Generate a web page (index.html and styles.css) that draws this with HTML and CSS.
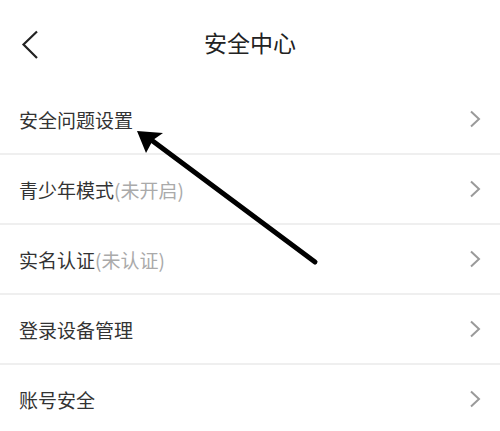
FILE: index.html
```html
<!DOCTYPE html>
<html lang="zh">
<head>
    <meta charset="UTF-8">
    <meta name="viewport" content="width=device-width, initial-scale=1.0">
    <title>安全中心</title>
    <link rel="stylesheet" href="styles.css">
</head>
<body>
<div id="page">
    <div class="header">
        <svg class="back" width="18" height="30" viewBox="0 0 18 30">
            <polyline points="16,1.5 2.5,14.5 16,28" fill="none" stroke="#222" stroke-width="2.2"/>
        </svg>
        <h1 class="title">安全中心</h1>
    </div>
    <ul class="menu">
        <li class="item"><span class="label">安全问题设置</span><svg class="chevron" width="12" height="18" viewBox="0 0 12 18"><polyline points="2,1.5 10,9 2,16.5" fill="none" stroke="#9a9a9a" stroke-width="2"/></svg></li>
        <li class="item"><span class="label">青少年模式<em>(未开启)</em></span><svg class="chevron" width="12" height="18" viewBox="0 0 12 18"><polyline points="2,1.5 10,9 2,16.5" fill="none" stroke="#9a9a9a" stroke-width="2"/></svg></li>
        <li class="item"><span class="label">实名认证<em>(未认证)</em></span><svg class="chevron" width="12" height="18" viewBox="0 0 12 18"><polyline points="2,1.5 10,9 2,16.5" fill="none" stroke="#9a9a9a" stroke-width="2"/></svg></li>
        <li class="item"><span class="label">登录设备管理</span><svg class="chevron" width="12" height="18" viewBox="0 0 12 18"><polyline points="2,1.5 10,9 2,16.5" fill="none" stroke="#9a9a9a" stroke-width="2"/></svg></li>
        <li class="item"><span class="label">账号安全</span><svg class="chevron" width="12" height="18" viewBox="0 0 12 18"><polyline points="2,1.5 10,9 2,16.5" fill="none" stroke="#9a9a9a" stroke-width="2"/></svg></li>
    </ul>
    <svg class="pointer" width="500" height="431" viewBox="0 0 500 431">
        <line x1="315" y1="262" x2="150" y2="139" stroke="#000" stroke-width="5" stroke-linecap="round"/>
        <path d="M137,131 L163,133 L153,140 L146,153 Z" fill="#000"/>
    </svg>
</div>
</body>
</html>
```
FILE: styles.css
```css
body {
    margin: 0;
    font-family: "Noto Sans CJK SC", "Noto Sans", sans-serif;
    background: #fff;
    color: #333;
}

#page {
    position: relative;
    width: 500px;
    height: 431px;
    overflow: hidden;
}

.header {
    height: 85px;
    display: flex;
    align-items: center;
    justify-content: center;
    position: relative;
}

.back {
    position: absolute;
    left: 21px;
    top: 30px;
}

.title {
    margin: 0 0 1px 0;
    font-size: 23px;
    font-weight: normal;
    color: #222;
}

.menu {
    list-style: none;
    margin: 0;
    padding: 0;
}

.item {
    height: 68px;
    border-bottom: 2px solid #efefef;
    display: flex;
    align-items: center;
    justify-content: space-between;
    padding: 0 19px 0 19px;
}

.label {
    font-size: 19px;
    color: #333;
}

.label em {
    font-style: normal;
    color: #aaa;
}

.pointer {
    position: absolute;
    left: 0;
    top: 0;
}
```
